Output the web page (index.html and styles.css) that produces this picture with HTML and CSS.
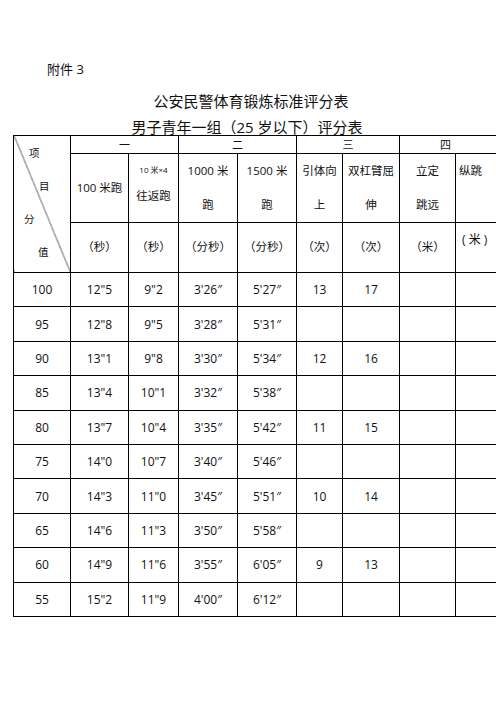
FILE: index.html
```html
<!DOCTYPE html>
<html lang="zh">
<head>
<meta charset="utf-8">
<title>公安民警体育锻炼标准评分表</title>
<link rel="stylesheet" href="styles.css">
</head>
<body>
<div class="page">
  <p class="annex">附件 3</p>
  <h1 class="title">公安民警体育锻炼标准评分表</h1>
  <h2 class="subtitle">男子青年一组（25 岁以下）评分表</h2>
  <div class="table-wrap">
    <table class="score">
      <colgroup>
        <col class="c1"><col class="c2"><col class="c3"><col class="c4"><col class="c5">
        <col class="c6"><col class="c7"><col class="c8"><col class="c9">
      </colgroup>
      <thead>
        <tr class="h1">
          <th rowspan="3" class="diag">
            <div class="diag-lbl l1">项</div>
            <div class="diag-lbl l2">目</div>
            <div class="diag-lbl l3">分</div>
            <div class="diag-lbl l4">值</div>
          </th>
          <th colspan="2">一</th>
          <th colspan="2">二</th>
          <th colspan="2">三</th>
          <th colspan="2" class="four">四</th>
        </tr>
        <tr class="h2">
          <th class="mid">100 米跑</th>
          <th class="top"><div class="small">10 米×4</div><div class="shuttle">往返跑</div></th>
          <th class="top">1000 米<br>跑</th>
          <th class="top">1500 米<br>跑</th>
          <th class="top">引体向<br>上</th>
          <th class="top">双杠臂屈<br>伸</th>
          <th class="top">立定<br>跳远</th>
          <th class="top left">纵跳</th>
        </tr>
        <tr class="h3">
          <th>（秒）</th>
          <th>（秒）</th>
          <th>（分秒）</th>
          <th>（分秒）</th>
          <th>（次）</th>
          <th>（次）</th>
          <th>（米）</th>
          <th class="jump-unit">( 米 )</th>
        </tr>
      </thead>
      <tbody>
        <tr><td>100</td><td>12"5</td><td>9"2</td><td>3'26″</td><td>5'27″</td><td>13</td><td>17</td><td></td><td></td></tr>
        <tr><td>95</td><td>12"8</td><td>9"5</td><td>3'28″</td><td>5'31″</td><td></td><td></td><td></td><td></td></tr>
        <tr><td>90</td><td>13"1</td><td>9"8</td><td>3'30″</td><td>5'34″</td><td>12</td><td>16</td><td></td><td></td></tr>
        <tr><td>85</td><td>13"4</td><td>10"1</td><td>3'32″</td><td>5'38″</td><td></td><td></td><td></td><td></td></tr>
        <tr><td>80</td><td>13"7</td><td>10"4</td><td>3'35″</td><td>5'42″</td><td>11</td><td>15</td><td></td><td></td></tr>
        <tr><td>75</td><td>14"0</td><td>10"7</td><td>3'40″</td><td>5'46″</td><td></td><td></td><td></td><td></td></tr>
        <tr><td>70</td><td>14"3</td><td>11"0</td><td>3'45″</td><td>5'51″</td><td>10</td><td>14</td><td></td><td></td></tr>
        <tr><td>65</td><td>14"6</td><td>11"3</td><td>3'50″</td><td>5'58″</td><td></td><td></td><td></td><td></td></tr>
        <tr><td>60</td><td>14"9</td><td>11"6</td><td>3'55″</td><td>6'05″</td><td>9</td><td>13</td><td></td><td></td></tr>
        <tr><td>55</td><td>15"2</td><td>11"9</td><td>4'00″</td><td>6'12″</td><td></td><td></td><td></td><td></td></tr>
      </tbody>
    </table>
  </div>
</div>
</body>
</html>
```

FILE: styles.css
```css
html, body {
  margin: 0;
  padding: 0;
  background: #fff;
  overflow: hidden;
}
body {
  font-family: "Open Sans", "Noto Sans CJK SC", sans-serif;
  color: #111;
}
.page {
  padding-top: 59px;
  width: 496px;
}
.annex {
  margin: 0;
  padding-left: 47px;
  font-size: 13px;
  line-height: 20px;
  font-weight: normal;
}
.title {
  margin: 10px 0 0;
  font-size: 15px;
  line-height: 24px;
  font-weight: normal;
  text-align: center;
  padding-left: 6px;
}
.subtitle {
  margin: 6px 0 0;
  font-size: 15px;
  line-height: 16px;
  font-weight: normal;
  text-align: center;
  padding-right: 2px;
}
.table-wrap {
  overflow: hidden;
  width: 496px;
}
.score {
  margin-left: 13px;
  border-collapse: collapse;
  table-layout: fixed;
  width: 498px;
  font-size: 12px;
}
.c1 { width: 57px; }
.c2 { width: 58px; }
.c3 { width: 50px; }
.c4 { width: 59px; }
.c5 { width: 59px; }
.c6 { width: 46px; }
.c7 { width: 57px; }
.c8 { width: 56px; }
.c9 { width: 56px; }
.score th, .score td {
  border: 1px solid #000;
  padding: 0;
  text-align: center;
  font-weight: normal;
  font-size: 11.5px;
}
.score td {
  font-size: 12px;
}
.h1 th {
  height: 17px;
  line-height: 17px;
  font-size: 11px;
}
.four {
  padding-right: 20px !important;
}
.h2 th {
  height: 67px;
  line-height: 34px;
}
.h2 .top {
  vertical-align: top;
}
.h2 .mid {
  vertical-align: middle;
}
.h2 .left {
  text-align: left;
  padding-left: 3px;
}
.small {
  font-size: 8px;
  line-height: 32px;
}
.shuttle {
  line-height: 20px;
}
.h3 th {
  height: 47px;
  line-height: 20px;
  vertical-align: middle;
  padding-bottom: 2px;
}
.h3 .jump-unit {
  height: 42px;
  text-align: left;
  padding-left: 6px;
  vertical-align: top;
  padding-top: 7px;
  padding-bottom: 0;
  font-size: 12px;
}
.diag {
  vertical-align: top;
  text-align: left !important;
  background: linear-gradient(to top right, transparent calc(50% - 0.7px), #333 50%, transparent calc(50% + 0.7px));
  padding-top: 1px !important;
}
.diag-lbl {
  font-size: 10.5px;
  line-height: 33px;
}
.l1 { padding-left: 15px; }
.l2 { padding-left: 25px; }
.l3 { padding-left: 10px; }
.l4 { padding-left: 24px; }
.score tbody td {
  height: 33.4px;
  vertical-align: middle;
}
```
